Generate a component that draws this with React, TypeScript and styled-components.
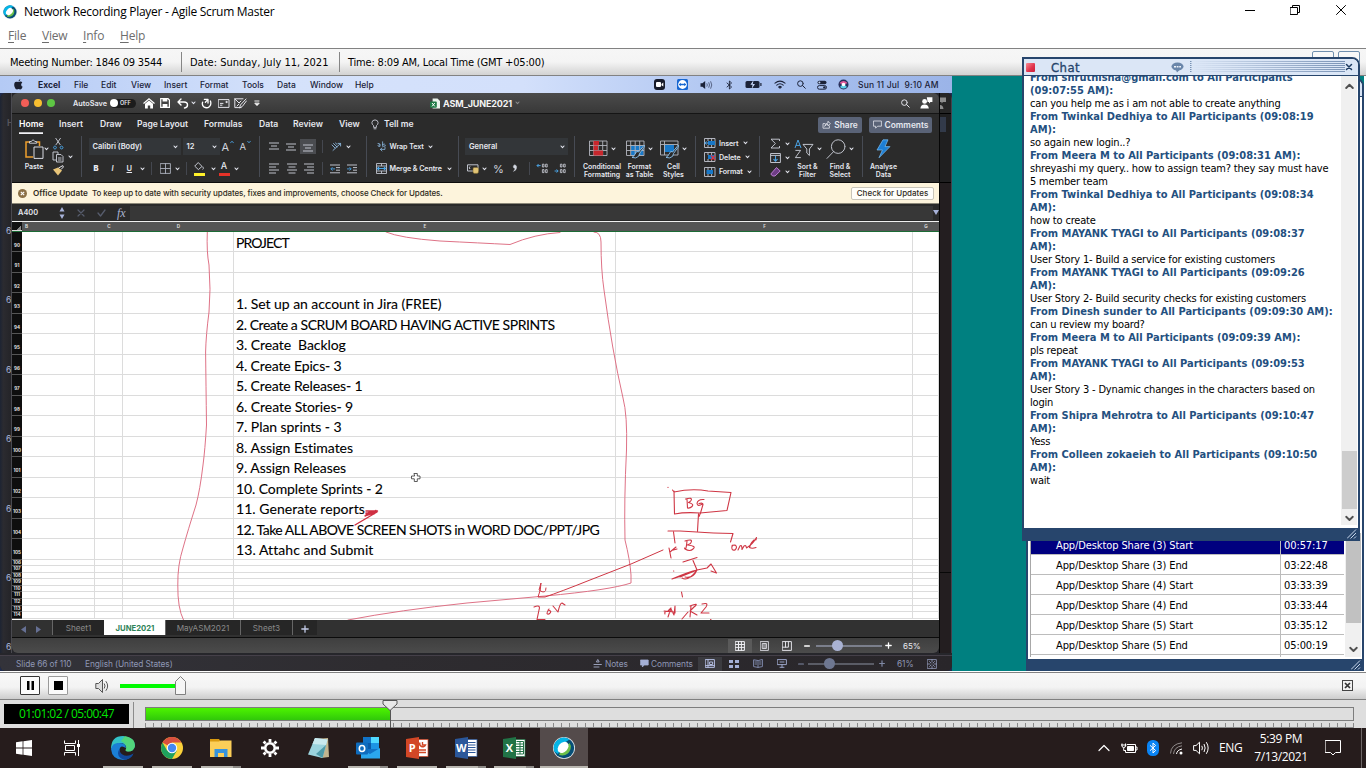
import React from "react";
import styled, { createGlobalStyle, css } from "styled-components";

const TAHOMA = `"DejaVu Sans Condensed", "DejaVu Sans", "Liberation Sans", sans-serif`;
const SEGOE = `"Open Sans", "Noto Sans", sans-serif`;
const MAC = `Inter, Roboto, "Liberation Sans", sans-serif`;
const NAVY = "#27456c";

const GlobalStyle = createGlobalStyle`
  * { box-sizing: border-box; }
  body { margin: 0; width: 1366px; height: 768px; overflow: hidden; background: #fff; }
  svg { display: block; flex: none; }
`;

/* ---------- application frame ---------- */

const Page = styled.div`
  width: 1366px;
  height: 768px;
  display: flex;
  flex-direction: column;
  overflow: hidden;
  background: #fff;
  white-space: pre;
  > * { flex: none; }
`;

const TitleBar = styled.header`
  height: 24px;
  display: flex;
  align-items: center;
  padding-left: 3px;
  font: 12px/16px ${SEGOE};
  letter-spacing: -0.28px;
  color: #000;
`;
const TitleText = styled.span`
  padding-left: 7px;
  flex: 1;
`;
const WindowButtons = styled.div`
  display: grid;
  grid-template-columns: repeat(3, 45.5px);
  justify-items: center;
  align-items: center;
  align-self: flex-start;
  height: 20px;
  width: 139px;
`;

const MenuBar = styled.nav`
  height: 24px;
  display: grid;
  grid-template-columns: 34px 41px 37px 40px;
  align-items: center;
  padding-left: 8px;
  font: 12px/16px ${SEGOE};
  letter-spacing: -0.2px;
  color: #6d6d6d;
  u { text-underline-offset: 2px; }
`;

const InfoBar = styled.div`
  height: 28px;
  border-top: 1px solid #828282;
  border-bottom: 1px solid #828282;
  background: linear-gradient(#f6f6f6 0, #f4f4f4 50%, #d2d2d2 100%);
  display: flex;
  align-items: center;
  font: 11px/14px ${TAHOMA};
  color: #000;
`;
const InfoCell = styled.div<{ $w: number; $pad: number; $ls?: number; $last?: boolean }>`
  width: ${(p) => p.$w}px;
  height: 20px;
  padding: 4px 0 0 ${(p) => p.$pad}px;
  border-right: 1px solid ${(p) => (p.$last ? "transparent" : "#858585")};
  letter-spacing: ${(p) => p.$ls ?? 0}px;
`;

const Stage = styled.main`
  height: 595px;
  width: 1364px;
  display: flex;
  position: relative;
  background: #008080;
`;

/* ---------- shared Mac desktop ---------- */

const MacDesktop = styled.section`
  width: 952px;
  height: 595px;
  display: flex;
  flex-direction: column;
  background: #1f2b4d;
  overflow: hidden;
  font-family: ${MAC};
`;

const MacMenu = styled.div`
  height: 17px;
  flex: none;
  display: grid;
  grid-template-columns: 24px 36px 27px 30px 33px 36px 42px 35px 33px 45px 1fr 23px 23px 26px 19px 29px 23px 20px 21px 20px 94px;
  align-items: center;
  padding-left: 14px;
  background: linear-gradient(90deg, #b4caf5, #d5e2fb 30%, #d3e0fb 55%, #a9c1ef 80%, #9bb4e8);
  color: #1b2238;
  font-size: 8.5px;
  font-weight: 500;
  b { font-weight: 700; }
`;
const MacClock = styled.span`
  letter-spacing: 0.2px;
`;

const MacBody = styled.div`
  flex: 1;
  min-height: 0;
  display: grid;
  grid-template-columns: 12px 927px 13px;
  grid-template-rows: 560px 1fr;
  background: #26262b;
  border-radius: 6px;
  overflow: hidden;
`;

const SlideStrip = styled.div`
  background: linear-gradient(90deg, #1d2433, #2b2b30 30%, #242428);
  border-right: 1px solid #4a4a50;
  display: flex;
  flex-direction: column;
  overflow: hidden;
  font-size: 8.5px;
  line-height: 10px;
  color: #aab6da;
  padding: 24px 0 0 6px;
`;
const StripTab = styled.div`
  height: 109px;
  flex: none;
  font-weight: 700;
  line-height: 12px;
  color: #55555c;
  padding-left: 1px;
`;
const StripNumber = styled.div`
  height: 69.4px;
  flex: none;
`;

const BackEdge = styled.div`
  background: #231e20;
  border-left: 1px solid #060606;
  border-right: 1px solid #45424d;
  display: flex;
  flex-direction: column;
`;
const BackEdgeTop = styled.div`
  height: 21px;
  border-bottom: 1px solid #000;
  background: #262626;
  padding-top: 4px;
`;
const BackEdgeRibbon = styled.div`
  height: 69px;
  border-bottom: 1px solid #000;
  background: #1f1f20;
  padding-top: 3px;
`;
const BackEdgeButton = styled.div`
  width: 6px;
  height: 15px;
  background: #323a4a;
`;
const BackEdgeLine = styled.div`
  margin-top: 389px;
  height: 1px;
  background: #080808;
`;

const BackStatus = styled.div`
  grid-column: 1 / 4;
  display: grid;
  grid-template-columns: 69px 508px 12px 35px 11px 47px 24px 24px 24px 24px 14px 71px 18px 30px 1fr;
  align-items: center;
  padding: 0 0 0 16px;
  margin-top: 2px;
  border-top: 1px solid #454049;
  background: linear-gradient(90deg, #33333a, #2e2c30 40%, #29262a);
  color: #8f97b4;
  font-size: 8.3px;
  letter-spacing: -0.07px;
`;

/* ---------- spreadsheet window ---------- */

const ExcelWindow = styled.div`
  height: 560px;
  border-radius: 6px;
  overflow: hidden;
  display: flex;
  flex-direction: column;
  background: #2b2b2b;
  color: #e6e8ef;
  > * { flex: none; }
`;

const ExcelTitle = styled.div`
  height: 21px;
  display: grid;
  grid-template-columns: 13px 13px 26px 37px 33px 17px 17px 14px 10px 17px 16px 20px 176px 13px 72px 386px 19px 1fr;
  align-items: center;
  padding-left: 9px;
  background: linear-gradient(#4b4b4b, #383838);
  border-bottom: 1px solid #151515;
  font-size: 7.3px;
  font-weight: 600;
`;
const Light = styled.i<{ $c: string }>`
  width: 8px;
  height: 8px;
  border-radius: 50%;
  background: ${(p) => p.$c};
`;
const Toggle = styled.div`
  width: 26px;
  height: 9px;
  border-radius: 5px;
  background: #1c1c1c;
  display: flex;
  align-items: center;
  gap: 2px;
  font-size: 5.5px;
  line-height: 9px;
  &::before {
    content: "";
    width: 8px;
    height: 8px;
    border-radius: 50%;
    background: #fff;
  }
`;
const FileName = styled.span`
  font-size: 9px;
  font-weight: 700;
  color: #f4f4f4;
  letter-spacing: -0.15px;
`;

const RibbonTabs = styled.div`
  height: 21px;
  display: grid;
  grid-template-columns: 40px 41px 37px 67px 55px 34px 46px 32px 13px 434px 51px 63px;
  align-items: center;
  padding-left: 7px;
  font-size: 8.6px;
  font-weight: 600;
`;
const RibbonTab = styled.span<{ $active?: boolean }>`
  justify-self: start;
  line-height: 15px;
  height: 17px;
  margin-top: 1px;
  ${(p) => p.$active && css`box-shadow: inset 0 -2px 0 -0.3px #f2f2f6; color: #fff;`}
`;
const RibbonButton = styled.div<{ $w: number }>`
  width: ${(p) => p.$w}px;
  height: 16px;
  border-radius: 2px;
  background: #5a6377;
  display: flex;
  align-items: center;
  justify-content: center;
  gap: 3px;
  font-size: 8.4px;
`;

const Ribbon = styled.div`
  height: 48px;
  display: flex;
  padding-top: 1px;
  border-bottom: 1px solid #0c0c0c;
  font-size: 7.5px;
  font-weight: 600;
`;
const RibbonGroup = styled.div<{ $w: number; $last?: boolean }>`
  width: ${(p) => p.$w}px;
  height: 43px;
  flex: none;
  ${(p) => !p.$last && css`background: linear-gradient(#474b54, #474b54) 100% 0 / 1px 41px no-repeat;`}
  display: flex;
  flex-direction: column;
  justify-content: space-between;
`;
const Tools = styled.div<{ $cols: string; $h?: number }>`
  height: ${(p) => p.$h ?? 21}px;
  display: grid;
  grid-template-columns: ${(p) => p.$cols};
  align-items: center;
`;
const ToolLabel = styled.span`
  font-size: 7.1px;
  letter-spacing: -0.08px;
`;
const Combo = styled.div<{ $w: number }>`
  width: ${(p) => p.$w}px;
  height: 17px;
  padding: 0 3px 0 4px;
  background: #333639;
  display: flex;
  align-items: center;
  justify-content: space-between;
`;
const Divider = styled.i`
  width: 1px;
  height: 13px;
  background: #44474f;
`;
const BigTools = styled.div<{ $cols: string }>`
  height: 43px;
  display: grid;
  grid-template-columns: ${(p) => p.$cols};
`;
const BigTool = styled.div`
  display: flex;
  flex-direction: column;
  align-items: center;
  line-height: 8px;
  font-size: 6.9px;
  text-align: center;
`;
const BigIcon = styled.div`
  height: 26.5px;
  display: flex;
  align-items: center;
  gap: 3px;
`;
const Glyph = styled.span<{ $size: number }>`
  font-size: ${(p) => p.$size}px;
  line-height: 14px;
  font-weight: 400;
  color: #d0d4de;
`;
const FontSizeIcon = styled.span`
  display: flex;
  align-items: flex-start;
  gap: 0.5px;
`;
const SwatchedIcon = styled.span<{ $c: string }>`
  width: 11px;
  height: 14px;
  display: flex;
  align-items: center;
  justify-content: center;
  font-size: 9px;
  font-weight: 500;
  line-height: 10px;
  padding-bottom: 2px;
  border-bottom: 3px solid ${(p) => p.$c};
`;
const ActiveLines = styled.div`
  width: 16px;
  height: 15px;
  display: flex;
  align-items: center;
  justify-content: center;
  background: #4a4c50;
  margin-left: -1px;
`;
const CaretColumn = styled.div`
  display: flex;
  flex-direction: column;
  justify-content: space-between;
  align-items: center;
  padding: 6px 0 5px;
`;

const UpdateBar = styled.div`
  height: 21px;
  display: grid;
  grid-template-columns: 15px 59px 759px 1fr;
  align-items: center;
  padding-left: 6px;
  background: #fdf4dc;
  border-bottom: 1px solid #8b8778;
  color: #2f2b22;
  font-size: 8px;
  font-weight: 500;
  b { font-weight: 600; font-size: 8.2px; }
`;
const UpdateText = styled.span`
  letter-spacing: -0.1px;
`;
const UpdateButton = styled.div`
  width: 83px;
  height: 13px;
  border: 1px solid #c9c5b9;
  border-radius: 2px;
  background: #fffefa;
  text-align: center;
  line-height: 11px;
`;

const FormulaBar = styled.div`
  height: 18px;
  display: grid;
  grid-template-columns: 41px 18px 20px 20px 13px 803px 1fr;
  align-items: center;
  padding-left: 6px;
  background: #2a2a2a;
  border-bottom: 1px solid #f0f0f0;
  font-size: 7.4px;
  font-weight: 600;
`;
const FormulaField = styled.div`
  height: 14px;
  background: #373737;
`;
const Fx = styled.span`
  font: italic 12px/12px "Liberation Serif", serif;
  color: #aab4d2;
`;

const sheetColumns = "10px 73px 28px 111px 382px 297px 1fr";

const ColumnHeads = styled.div`
  height: 10px;
  display: grid;
  grid-template-columns: ${sheetColumns};
  background: #555;
  border-bottom: 1px solid #1c6b35;
  color: #d8d8d8;
  font-size: 4.6px;
  font-weight: 700;
  line-height: 9px;
  text-align: center;
`;
const ClippedHead = styled.span`
  text-align: left;
  padding-left: 3px;
`;
const Corner = styled.i`
  background: #111;
  border-bottom: 1px solid #ddd;
  &::after {
    content: "";
    display: block;
    margin: 3px 1px 0 4px;
    height: 5px;
    background: linear-gradient(135deg, transparent 50%, #8a8a8a 50%);
  }
`;

const Sheet = styled.div`
  position: relative;
  height: 388px;
  background: #fff;
  overflow: hidden;
`;
const SheetRow = styled.div<{ $small?: boolean }>`
  height: ${(p) => (p.$small ? 6.6 : 20.47)}px;
  display: grid;
  grid-template-columns: ${sheetColumns};
  grid-template-rows: 100%;
`;
const RowHead = styled.div<{ $small?: boolean }>`
  background: #0e0e0e;
  color: #e4e4e4;
  font: 700 4.5px/6px ${MAC};
  text-align: center;
  border-bottom: 0.5px solid #555;
  padding-top: ${(p) => (p.$small ? 0 : 11)}px;
`;
const Cell = styled.div<{ $ls?: number }>`
  border-right: 1px solid #dcdcdc;
  border-bottom: 1px solid #dcdcdc;
  color: #000;
  font: 14px/22px Lato, "Open Sans", sans-serif;
  -webkit-text-stroke: 0.1px #000;
  letter-spacing: ${(p) => p.$ls ?? 0}px;
  padding-left: 2px;
`;
const Ink = styled.svg`
  position: absolute;
  left: 0;
  top: 0;
`;

const SheetTabs = styled.div`
  height: 18px;
  display: grid;
  grid-template-columns: 40px 52px 61px 75px 52px 25px 1fr;
  background: #313131;
  border-bottom: 1px solid #0b0b0b;
  font-size: 8.2px;
  color: #8a8a8a;
`;
const SheetTab = styled.div<{ $active?: boolean }>`
  height: 15px;
  line-height: 17px;
  text-align: center;
  border-left: 1px solid #666;
  background: #262626;
  ${(p) => p.$active && css`background: #fff; color: #2e8358; font-weight: 700; font-size: 7.7px; border-color: #fff;`}
`;
const TabArrows = styled.div`
  display: flex;
  gap: 10px;
  padding: 6px 0 0 9px;
`;
const PlusSpace = styled.span`
  padding-top: 5px;
`;

const ExcelStatus = styled.div`
  height: 15px;
  display: grid;
  grid-template-columns: 716px 24px 24px 22px 18px 69px 18px 1fr;
  align-items: center;
  background: linear-gradient(#3f3f3f, #4b4b4b);
  font-size: 8px;
  color: #e8e8ee;
`;
const ActiveView = styled.div<{ $dim?: boolean }>`
  width: 24px;
  height: 14px;
  display: flex;
  align-items: center;
  justify-content: center;
  background: ${(p) => (p.$dim ? "#3b3b40" : "#5a5a5a")};
`;
const ZoomTrack = styled.div<{ $dim?: boolean }>`
  width: 66px;
  height: 2px;
  background: ${(p) => (p.$dim ? "#5a5c66" : "#7b7f8c")};
  display: flex;
  align-items: center;
  padding-left: 16px;
  &::before {
    content: "";
    width: 11px;
    height: 11px;
    border-radius: 50%;
    background: ${(p) => (p.$dim ? "#6e7791" : "#a9b2d3")};
  }
`;
const Center = styled.div`
  display: flex;
  justify-content: center;
`;

/* ---------- floating panels ---------- */

const EventPanel = styled.section`
  position: absolute;
  left: 1026px;
  top: 2px;
  width: 338px;
  height: 593px;
  border: solid ${NAVY};
  border-width: 2px 2px 12px 2px;
  border-radius: 0 8px 0 0;
  background: #fff;
  overflow: hidden;
  display: flex;
  align-items: flex-end;
  padding: 0 1px 2px 2px;
  font: 11px/14px ${TAHOMA};
  letter-spacing: -0.1px;
`;
const PanelCap = styled.div`
  position: absolute;
  right: 0;
  top: 0;
  width: 40px;
  height: 17px;
  background: #d7e3f4;
  border-bottom: 1px solid ${NAVY};
`;
const EventTable = styled.div`
  width: 315px;
  border-left: 1px solid #a8a8a8;
  display: grid;
  grid-auto-rows: 20px;
  height: 122px;
  overflow: hidden;
`;
const EventRow = styled.div<{ $selected?: boolean }>`
  display: grid;
  grid-template-columns: 249px 1fr;
  grid-template-rows: 20px;
  line-height: 22px;
  color: #000;
  ${(p) => p.$selected && css`background: #00007f; color: #fff;`}
  span {
    border-bottom: 1px solid #bcbcbc;
    padding-left: 25px;
  }
  span + span {
    border-left: 1px solid #bcbcbc;
    padding-left: 3px;
  }
`;
const EventScroll = styled.div`
  width: 16px;
  height: 124px;
  margin-left: 1px;
  background: #f0f0f0;
  display: flex;
  flex-direction: column;
  justify-content: space-between;
  align-items: center;
  padding-bottom: 4px;
  &::before {
    content: "";
    width: 15px;
    height: 90px;
    background: #c1c1c1;
  }
`;
const Grip = styled.svg`
  position: absolute;
  right: 1px;
  bottom: -11px;
`;
const PanelGrip = styled.div`
  position: absolute;
  left: 1348px;
  bottom: 12px;
  width: 14px;
`;

const ChatPanel = styled.section`
  position: absolute;
  left: 1022px;
  top: -19px;
  width: 338px;
  height: 484px;
  border: 2px solid ${NAVY};
  border-bottom-width: 13px;
  border-radius: 0 8px 0 0;
  background: #fff;
  display: flex;
  flex-direction: column;
`;
const ChatHeader = styled.div`
  height: 17px;
  flex: none;
  border-bottom: 1px solid ${NAVY};
  background: #dbe6f6;
  border-radius: 0 6px 0 0;
  display: grid;
  grid-template-columns: 25px 120px 17px 157px 1fr;
  align-items: center;
  padding-left: 2px;
  font: 13px/15px "DejaVu Sans Condensed", sans-serif;
  letter-spacing: 0.4px;
  color: #24436a;
`;
const ChatTitle = styled.span`
  -webkit-text-stroke: 0.3px #24436a;
`;
const RecordDot = styled.i`
  width: 9px;
  height: 9px;
  border-radius: 1px;
  background: linear-gradient(135deg, #f88a94, #e0314b 60%, #c9203b);
`;
const HeaderStripes = styled.div`
  height: 12px;
  margin-left: 2px;
  background: repeating-linear-gradient(rgba(80, 112, 155, 0.7) 0 1px, transparent 1px 2px);
  mask-image: linear-gradient(90deg, #000 1px, transparent 2px, #000 100%);
`;
const ChatBody = styled.div`
  flex: 1;
  min-height: 0;
  display: flex;
  justify-content: space-between;
  padding-right: 1px;
`;
const Messages = styled.div`
  overflow: hidden;
  padding-left: 6px;
  font: 11px/13px ${TAHOMA};
  color: #000;
  flex: 1;
  display: flex;
  flex-direction: column;
`;
const Message = styled.div`
  &:first-child { margin-top: -5px; }
  letter-spacing: -0.18px;
`;
const Sender = styled.div`
  font-weight: 700;
  color: #24507f;
  letter-spacing: 0.01px;
`;
const ChatScroll = styled.div`
  width: 16px;
  height: 449px;
  background: #f0f0f0;
  display: flex;
  flex-direction: column;
  align-items: center;
  padding-top: 7px;
`;
const ChatThumb = styled.div`
  width: 15px;
  height: 58px;
  margin: 361px 0 6px;
  background: #cdcdcd;
`;
const HiddenButtons = styled.div`
  position: absolute;
  left: 1312px;
  top: -25px;
  display: flex;
  gap: 4px;
  i {
    width: 22px;
    height: 12px;
    border: 1px solid #6f8fae;
    border-radius: 2px;
    background: #f8f8f8;
  }
`;

/* ---------- player ---------- */

const Controls = styled.div`
  height: 27px;
  margin-top: 1px;
  border-top: 1px solid #828282;
  background: linear-gradient(#f8f8f8 0, #f3f3f3 55%, #cdcdcd 100%);
  display: grid;
  grid-template-columns: 28px 47px 25px 1222px 1fr;
  align-items: center;
  padding: 0 0 1px 20px;
`;
const PlayerButton = styled.div<{ $soft?: boolean }>`
  width: 20px;
  height: 19px;
  border: 1px solid ${(p) => (p.$soft ? "#9a9a9a" : "#333")};
  border-radius: 1px;
  background: #fbfbfb;
  display: flex;
  align-items: center;
  justify-content: center;
`;
const VolumeTrack = styled.div`
  height: 19px;
  display: flex;
  align-items: center;
  &::before {
    content: "";
    width: 56px;
    height: 4px;
    background: #00fa00;
  }
  svg { margin-left: -1px; }
`;

const Timeline = styled.div`
  height: 29px;
  border-top: 1px solid #808080;
  background: #dedede;
  display: flex;
`;
const Clock = styled.div`
  width: 125px;
  height: 20px;
  margin: 4px 4px 0 4px;
  background: #000;
  color: #00e800;
  text-align: center;
  font: 12px/19px "Open Sans", sans-serif;
  letter-spacing: -0.55px;
`;
const TrackArea = styled.div`
  width: 1221px;
  height: 26px;
  margin-top: 2px;
  padding: 5px 0 0 11px;
  border-left: 1px solid #8c8c8c;
  position: relative;
`;
const Track = styled.div`
  height: 14px;
  border: 1px solid #7d7d7d;
  &::before {
    content: "";
    display: block;
    width: 244px;
    height: 12px;
    background: linear-gradient(#4df400, #30c80a);
  }
`;
const Ticks = styled.div`
  margin-top: 2px;
  height: 5px;
  border-bottom: 1px solid #8a8a8a;
  background: repeating-linear-gradient(90deg, #8a8a8a 0 1px, transparent 1px 8px);
`;
const PlayHead = styled.svg`
  position: absolute;
  left: 248px;
  top: -2px;
`;

/* ---------- Windows taskbar ---------- */

const Taskbar = styled.footer`
  height: 40px;
  background: #261c1c;
  display: flex;
  color: #fff;
`;
const TaskItem = styled.div<{ $w: number; $run?: boolean; $active?: boolean; $stack?: boolean }>`
  width: ${(p) => p.$w}px;
  height: 40px;
  display: flex;
  align-items: center;
  justify-content: center;
  ${(p) => p.$run && css`
    background: ${p.$active ? "linear-gradient(#b9b6b0,#b9b6b0) 0 100% / 100% 2px no-repeat, #544b4b" : `linear-gradient(90deg, #b9b6b0 0 ${p.$stack ? 32 : 40}px, #8c8986 0) 50% 100% / 40px 2px no-repeat`};
  `}
`;
const Tray = styled.div`
  margin-left: auto;
  display: grid;
  grid-template-columns: 23px 26px 23px 23px 26px 34px 54px 18px 21px 1fr;
  align-items: center;
  width: 268px;
  font: 12px/18px ${SEGOE};
  letter-spacing: -0.35px;
`;
const TrayClock = styled.div`
  text-align: center;
  width: 58px;
  margin-left: -1px;
`;
const ShowDesktop = styled.i`
  justify-self: end;
  width: 5px;
  height: 40px;
  border-left: 1px solid #6d6666;
`;

/* ---------- icons ---------- */

type StrokeProps = { d: string; w?: number; h?: number; vb?: string; c?: string; sw?: number; fill?: string };
const Stroke = ({ d, w = 12, h = 12, vb, c = "#d5d8e2", sw = 1, fill = "none" }: StrokeProps) => (
  <svg width={w} height={h} viewBox={vb ?? `0 0 ${w} ${h}`} fill={fill} stroke={c} strokeWidth={sw} strokeLinecap="round" strokeLinejoin="round">
    <path d={d} />
  </svg>
);

const Caret = ({ c = "#e3e5ee" }: { c?: string }) => <Stroke w={5} h={4} d="M1 1L2.5 2.7L4 1" c={c} sw={1.1} />;
const SearchIcon = ({ c = "#1b2238", s = 9 }: { c?: string; s?: number }) => (
  <Stroke w={s} h={s} vb="0 0 9 9" d="M6.2 3.6A2.8 2.8 0 1 1 .6 3.6A2.8 2.8 0 1 1 6.2 3.6M5.6 5.6L8.3 8.3" c={c} />
);

const WebexLogo = ({ s }: { s: number }) => (
  <svg width={s} height={s} viewBox="0 0 22 22">
    <circle cx="11" cy="11" r="11" fill="#dfe6ea" />
    <circle cx="11" cy="11" r="10.2" fill="#064f77" />
    <path d="M1.4 14.5A10.2 10.2 0 0 1 16.5 2.4L11 6L5 17Z" fill="#05b5e6" />
    <path d="M6 18Q15 20 17.6 12Q18.4 8 16.5 6L8 14Z" fill="#6cc04a" />
    <ellipse cx="10.1" cy="10.4" rx="4.6" ry="6.3" transform="rotate(42 10.1 10.4)" fill="#fff" />
  </svg>
);

const Lines = ({ rows }: { rows: [number, number, number][] }) => (
  <svg width="10" height="11" viewBox="0 0 10 11" stroke="#cfd2dc" strokeWidth="0.9">
    {rows.map(([x1, x2, y]) => <path key={y} d={`M${x1} ${y}H${x2}`} />)}
  </svg>
);

const Indent = ({ right }: { right?: boolean }) => (
  <svg width="11" height="10" viewBox="0 0 11 10" strokeWidth="0.9" fill="none">
    <path d="M0 1H10M6 3.6H10M6 6.2H10M0 8.8H10" stroke="#cfd2dc" />
    <path d={right ? "M0 4.9H4M2.5 3.2L4.2 4.9L2.5 6.6" : "M5 4.9H1M2.5 3.2L.8 4.9L2.5 6.6"} stroke="#4ba3e3" />
  </svg>
);

const GridIcon = ({ kind }: { kind: "cond" | "table" | "cell" }) => (
  <svg width="19" height="19" viewBox="0 0 19 19">
    {kind === "table" && <path d="M5 5.5H17.5V15.5H5Z" fill="#1878c8" />}
    {kind === "cell" && <path d="M4 5H14V12H4Z" fill="#1878c8" />}
    <path d={kind === "cell" ? "M.5 1H18V15H.5ZM.5 4.5H18M4.5 1V15" : "M.5 1H18V15.5H.5ZM.5 5.5H18M.5 10.5H18M4.7 1V15.5M9.2 1V15.5M13.7 1V15.5"} stroke="#b3b6be" strokeWidth="0.9" fill="none" />
    {kind === "cond" && <path d="M4.5 1H10V5.3H4.5ZM4.5 10.5H14V15.5H4.5ZM4.5 5.8H9V10H4.5Z" fill="#c8272d" />}
    {kind !== "cond" && <path d="M18.4 5L12.6 12L10.8 11.4L9 14.2Q8 16.4 6 17.4Q10 19 12.6 16.3L13.6 13.4L19 6Z" fill="#2a2a2a" stroke="#8ec5f0" strokeWidth="0.9" />}
  </svg>
);

const SmallGrid = ({ kind }: { kind: "insert" | "delete" | "format" }) => (
  <svg width="12" height="10" viewBox="0 0 12 10" fill="none">
    <path d="M.5 .5H11M.5 9.5H11M.5 .5V9.5M4 .5V3M7.6 .5V3M11 .5V9.5M4 7V9.5M7.6 7V9.5" stroke="#bfc3cd" strokeWidth="0.9" />
    <rect x={kind === "format" ? 2.5 : 4} y="3" width={kind === "format" ? 6.5 : 7} height="4" fill="#1878c8" />
    {kind === "insert" && <path d="M4.5 5H.8M2.4 3.4L.8 5L2.4 6.6" stroke="#58aef0" />}
    {kind === "delete" && <path d="M7 3.5L11 8M11 3.5L7 8" stroke="#e4343c" strokeWidth="1.2" />}
  </svg>
);

const DecimalIcon = ({ right }: { right?: boolean }) => (
  <svg width="12" height="11" viewBox="0 0 12 11" fill="none">
    <path d="M6.4 1.2H8V4H6.4ZM9.6 1.2H11.2V4H9.6ZM9.6 6.6H11.2V9.6H9.6ZM6.4 6.6H8V9.6H6.4Z" stroke="#cfd2dc" strokeWidth="0.8" />
    <path d={right ? "M.6 8H4M2.6 6.4L4.2 8L2.6 9.6" : "M4.6 2.6H1M2.6 1L1 2.6L2.6 4.2"} stroke="#4ba3e3" />
  </svg>
);

const OfficeIcon = ({ letter, color, children }: { letter: string; color: string; children: React.ReactNode }) => (
  <svg width="24" height="24" viewBox="0 0 24 24">
    <rect x="11" y="3.5" width="12" height="17" fill="#fff" stroke={color} strokeWidth="0.7" />
    {children}
    <path d="M1 3L14 1V23L1 21Z" fill={color} />
    <text x="7.3" y="16" fontSize="11" fontWeight="700" fontFamily="Open Sans" fill="#fff" textAnchor="middle">{letter}</text>
  </svg>
);

const ScrollArrow = ({ up }: { up?: boolean }) => (
  <Stroke w={9} h={7} d={up ? "M1.2 5L4.5 1.8L7.8 5" : "M1.2 1.8L4.5 5L7.8 1.8"} c="#505050" sw={1.9} />
);

const GripLines = () => (
  <Grip width="10" height="10" viewBox="0 0 10 10" stroke="#c8d6ea" strokeWidth="1">
    <path d="M0 9.5L9 .5M3.5 9.5L9 4M7 9.5L9 7.5" />
  </Grip>
);

/* ---------- content ---------- */

const rows: { n: number; text?: string; ls?: number }[] = [
  { n: 90, text: "PROJECT", ls: -0.9 },
  { n: 91 },
  { n: 92 },
  { n: 93, text: "1. Set up an account in Jira (FREE)", ls: -0.06 },
  { n: 94, text: "2. Create a SCRUM BOARD HAVING ACTIVE SPRINTS", ls: -0.45 },
  { n: 95, text: "3. Create  Backlog", ls: -0.08 },
  { n: 96, text: "4. Create Epics- 3", ls: -0.14 },
  { n: 97, text: "5. Create Releases- 1", ls: -0.13 },
  { n: 98, text: "6. Create Stories- 9", ls: -0.06 },
  { n: 99, text: "7. Plan sprints - 3", ls: -0.06 },
  { n: 100, text: "8. Assign Estimates", ls: -0.02 },
  { n: 101, text: "9. Assign Releases", ls: -0.06 },
  { n: 102, text: "10. Complete Sprints - 2", ls: -0.1 },
  { n: 103, text: "11. Generate reports", ls: 0.05 },
  { n: 104, text: "12. Take ALL ABOVE SCREEN SHOTS in WORD DOC/PPT/JPG", ls: -0.53 },
  { n: 105, text: "13. Attahc and Submit", ls: 0.07 },
  ...[106, 107, 108, 109, 110, 111, 112, 113, 114].map((n) => ({ n })),
];

const messages: { from: string; text: string }[] = [
  { from: "From shruthisha@gmail.com to All Participants\n(09:07:55 AM):", text: "can you help me as i am not able to create anything" },
  { from: "From Twinkal Dedhiya to All Participants (09:08:19\nAM):", text: "so again new login..?" },
  { from: "From Meera M to All Participants (09:08:31 AM):", text: "shreyashi my query.. how to assign team? they say must have\n5 member team" },
  { from: "From Twinkal Dedhiya to All Participants (09:08:34\nAM):", text: "how to create" },
  { from: "From MAYANK TYAGI to All Participants (09:08:37\nAM):", text: "User Story 1- Build a service for existing customers" },
  { from: "From MAYANK TYAGI to All Participants (09:09:26\nAM):", text: "User Story 2- Build security checks for existing customers" },
  { from: "From Dinesh sunder to All Participants (09:09:30 AM):", text: "can u review my board?" },
  { from: "From Meera M to All Participants (09:09:39 AM):", text: "pls repeat" },
  { from: "From MAYANK TYAGI to All Participants (09:09:53\nAM):", text: "User Story 3 - Dynamic changes in the characters based on\nlogin" },
  { from: "From Shipra Mehrotra to All Participants (09:10:47\nAM):", text: "Yess" },
  { from: "From Colleen zokaeieh to All Participants (09:10:50\nAM):", text: "wait" },
];

const events: [string, string][] = [
  ["App/Desktop Share (3) Start", "00:57:17"],
  ["App/Desktop Share (3) End", "03:22:48"],
  ["App/Desktop Share (4) Start", "03:33:39"],
  ["App/Desktop Share (4) End", "03:33:44"],
  ["App/Desktop Share (5) Start", "03:35:12"],
  ["App/Desktop Share (5) End", "05:00:19"],
];

const MacMenuBar = () => (
  <MacMenu>
    <svg width="9" height="11" viewBox="0 0 9 11" fill="#1b2030">
      <path d="M6.4 0Q6.4 1.7 4.5 2.4Q4.4 .8 6.4 0ZM4.5 3.1Q5.6 2.5 6.6 2.6Q7.7 2.7 8.3 3.5Q7 4.4 7.2 5.9Q7.4 7.3 8.7 7.8Q7.6 10.6 6.2 10.5L4.6 10.1L3 10.5Q1.6 10.6 .6 7.9Q-.5 4.6 1.3 3.1Q2.6 2.2 4.5 3.1Z" />
    </svg>
    <b>Excel</b><span>File</span><span>Edit</span><span>View</span><span>Insert</span><span>Format</span><span>Tools</span><span>Data</span><span>Window</span><span>Help</span>
    <svg width="11" height="11"><rect width="11" height="11" rx="3" fill="#171b2a" /><rect x="2" y="3" width="5" height="5" rx="1" fill="#fff" /><path d="M7.5 5L9.3 3.5V7.6L7.5 6.2Z" fill="#fff" /></svg>
    <svg width="11" height="11"><rect width="11" height="11" rx="1.5" fill="#1767d2" /><circle cx="5.5" cy="5.5" r="4.4" fill="#fff" /><path d="M1.6 5.5L3.8 3.8V4.8H7.2V3.8L9.4 5.5L7.2 7.2V6.2H3.8V7.2Z" fill="#1767d2" /></svg>
    <svg width="14" height="10" viewBox="0 0 14 10"><path d="M.5 3.3H2.4L5.2 1V9L2.4 6.7H.5Z" fill="#1b2238" /><path d="M6.8 3.4Q7.8 5 6.8 6.6M8.7 2.3Q10.3 5 8.7 7.7M10.6 1.3Q12.9 5 10.6 8.7" fill="none" stroke="#4c5878" strokeWidth="0.9" /></svg>
    <Stroke w={7} h={10} d="M1 3L5.6 7L3.4 9V1L5.6 3L1 7" c="#1b2238" sw={0.9} />
    <svg width="17" height="9" viewBox="0 0 17 9"><rect x=".5" y="1" width="14" height="7" rx="1.5" fill="#1b2238" /><rect x="15.3" y="3" width="1.2" height="3" fill="#1b2238" /><path d="M8.6 0L5.4 4.8H7.6L6.6 9L10 4H7.8Z" fill="#c7d7f8" /></svg>
    <Stroke w={12} h={9} d="M1 3.2Q6 -1 11 3.2M2.8 5.2Q6 2.4 9.2 5.2M4.7 7Q6 5.8 7.3 7L6 8.2Z" c="#1b2238" sw={1.1} />
    <SearchIcon />
    <svg width="10" height="10" viewBox="0 0 10 10"><rect x=".5" y=".8" width="9" height="3.4" rx="1.7" fill="#1b2238" /><circle cx="2.4" cy="2.5" r="1" fill="#c7d7f8" /><rect x=".5" y="5.6" width="9" height="3.6" rx="1.8" fill="none" stroke="#1b2238" /><circle cx="7.4" cy="7.4" r="1.2" fill="#1b2238" /></svg>
    <svg width="11" height="11"><circle cx="5.5" cy="5.5" r="5" fill="#27305c" /><path d="M1.5 4Q5.5 0 9.5 4L5.5 6Z" fill="#e25a9a" /><path d="M2 8Q5.5 3 9 8Q5.5 11 2 8Z" fill="#5bd0e8" /><circle cx="5.5" cy="5.5" r="1.8" fill="#fff" /></svg>
    <MacClock>Sun 11 Jul  9:10 AM</MacClock>
  </MacMenu>
);

const ExcelChrome = () => (
  <>
    <ExcelTitle>
      <Light $c="#f25e57" /><Light $c="#f8be30" /><Light $c="#5ec644" />
      <span>AutoSave</span>
      <Toggle>OFF</Toggle>
      <svg width="12" height="11" viewBox="0 0 12 11"><path d="M.5 5.5L6 .8L11.5 5.5" stroke="#fff" strokeWidth="1.2" fill="none" /><path d="M2 5.8L6 2.4L10 5.8V10.5H7.2V7.5H4.8V10.5H2Z" fill="#fff" /></svg>
      <svg width="10" height="10" viewBox="0 0 10 10"><path d="M.7 .7H8L9.4 2V9.4H.7Z" fill="none" stroke="#fff" strokeWidth="1.2" /><path d="M2.6 .7H7.3V3.6H2.6ZM2.6 6H7.4V9.4H2.6Z" fill="#fff" /></svg>
      <Stroke w={12} h={11} d="M4 1L1 4L4 7M1 4H7Q10.5 4 10.5 7Q10.5 9.6 7.5 10" c="#fff" sw={1.4} />
      <Caret />
      <Stroke w={12} h={11} d="M9.4 3Q10.6 6 8.6 8.4Q6 10.6 3.2 9.2Q.6 7.4 1.6 4.2M3.4 1.4H7V5M7 1.4L4.4 4.2" c="#fff" sw={1.3} />
      <Stroke w={12} h={9} d="M.6 .6H11V8.4H.6ZM2.4 4.4H5M2.4 6.2H4M8.4 2.4H9.2V3.6H8.4Z" c="#e4e4ea" />
      <Stroke w={13} h={11} d="M9 .8H.8V9.6H7M.8 .8L5 5L7 3M12 1L6.4 7L5.6 10L8.4 8.4L12.4 3M3 8L5 6" c="#e4e4ea" />
      <Stroke w={6} h={7} d="M.8 1H5M1 3.4L3 5.6L5 3.4Z" c="#fff" fill="#fff" sw={0.9} />
      <svg width="11" height="11" viewBox="0 0 11 11"><path d="M2.6 .5H7.5L10 3V10.5H2.6Z" fill="#e9f3ec" /><rect x="0" y="3.4" width="6.8" height="6.4" rx="1" fill="#1d7a45" /><path d="M2 5L4.8 8.4M4.8 5L2 8.4" stroke="#fff" /></svg>
      <FileName>ASM_JUNE2021</FileName>
      <Caret c="#8c8c8c" />
      <SearchIcon c="#e4e4ea" />
      <svg width="13" height="12" viewBox="0 0 13 12" fill="#fff"><circle cx="4.6" cy="4.4" r="2.4" /><path d="M.4 11.6Q.6 7.4 4.6 7.4Q8.4 7.4 8.8 11.6Z" /><path d="M6.8 .3H12.4V5H10.4L9 6.6V5H7.6Z" /></svg>
    </ExcelTitle>
    <RibbonTabs>
      <RibbonTab $active>Home</RibbonTab>
      <RibbonTab>Insert</RibbonTab>
      <RibbonTab>Draw</RibbonTab>
      <RibbonTab>Page Layout</RibbonTab>
      <RibbonTab>Formulas</RibbonTab>
      <RibbonTab>Data</RibbonTab>
      <RibbonTab>Review</RibbonTab>
      <RibbonTab>View</RibbonTab>
      <Stroke w={8} h={11} d="M2.6 8V6.6Q.8 5.4 .9 3.6Q1.1 1 4 .9Q6.9 1 7.1 3.6Q7.2 5.4 5.4 6.6V8ZM3 9.8H5" c="#c9ccd6" sw={0.9} />
      <RibbonTab>Tell me</RibbonTab>
      <RibbonButton $w={44}>
        <Stroke w={9} h={9} d="M3 3.6H1V8.2H7.4V6M2.8 6Q3.4 3 6 3V1.2L8.4 3.8L6 6V4.4Q4 4.2 2.8 6Z" c="#e4e6ee" sw={0.8} />Share
      </RibbonButton>
      <RibbonButton $w={63}>
        <Stroke w={9} h={9} d="M.8 1H8.4V6.2H4.6L2.6 8.2V6.2H.8Z" c="#e4e6ee" sw={0.8} />Comments
      </RibbonButton>
    </RibbonTabs>
  </>
);

const ExcelRibbon = () => (
  <Ribbon>
    <RibbonGroup $w={69.5}>
      <BigTools $cols="12px 20px 8px 12px 1fr">
        <i />
        <BigTool>
          <BigIcon>
            <svg width="19" height="20" viewBox="0 0 19 20" fill="none">
              <path d="M5 3H1V18H8" stroke="#efa02e" strokeWidth="1.5" /><path d="M12 3H14.5V7" stroke="#efa02e" strokeWidth="1.5" />
              <path d="M4.5 4.2V2.5H6.4Q8 -.6 9.8 2.5H11.7V4.2Z" stroke="#d8dae2" strokeWidth="0.9" />
              <path d="M9 8H18V19.4H9Z" stroke="#d8dae2" strokeWidth="1" fill="#2b2b2b" />
            </svg>
          </BigIcon>
          Paste
        </BigTool>
        <BigIcon><Caret /></BigIcon>
        <Center>
          <svg width="12" height="41" viewBox="0 -1 12 41" fill="none">
            <path d="M3.6 1L8.4 8M8.6 1L3.8 8" stroke="#cfd2dc" strokeWidth="0.9" /><path d="M4 9.6A1.4 1.4 0 1 1 3.9 9.5M10.6 9.6A1.4 1.4 0 1 1 10.5 9.5" stroke="#4ba3e3" />
            <path d="M1 15H6V17M1 15V23H4M4.5 17.5H9L11 19.5V25H4.5ZM6 21H9.5M6 23H9.5" stroke="#cfd2dc" strokeWidth="0.9" />
            <path d="M1 32.5L6 30.5L10 33.5L6 38.5Z" fill="#e7c478" /><path d="M6.5 31L10.8 28.6L11.4 30L9 32.5" stroke="#e4e4ea" />
          </svg>
        </Center>
        <Tools $cols="12px" $h={41}><Center><Caret /></Center></Tools>
      </BigTools>
    </RibbonGroup>
    <RibbonGroup $w={178.5}>
      <Tools $cols="7px 94px 39px 18px 1fr">
        <i />
        <Combo $w={92}>Calibri (Body)<Caret /></Combo>
        <Combo $w={37}>12<Caret /></Combo>
        <FontSizeIcon><Glyph $size={11}>A</Glyph><Stroke w={4} h={4} d="M.6 2.8L2 1.2L3.4 2.8" c="#4ba3e3" sw={0.9} /></FontSizeIcon>
        <FontSizeIcon><Glyph $size={9.5}>A</Glyph><Stroke w={4} h={4} d="M.6 1.2L2 2.8L3.4 1.2" c="#4ba3e3" sw={0.9} /></FontSizeIcon>
      </Tools>
      <Tools $cols="12px 18px 15px 13px 11px 9px 15px 11px 8px 15px 10px 15px 1fr">
        <i />
        <b>B</b><i>I</i><u>U</u><Caret /><Divider />
        <Stroke w={11} h={11} d="M.6 .6H10.4V10.4H.6ZM5.5 .6V10.4M.6 5.5H10.4" c="#aeb2be" sw={0.9} />
        <Caret />
        <Divider />
        <SwatchedIcon $c="#fff02a"><Stroke w={10} h={9} d="M4.5 .8L8 4.4L4.4 7.6L1 4.4ZM9 5Q10 7 9 7.4" sw={0.9} /></SwatchedIcon>
        <Center><Caret /></Center>
        <SwatchedIcon $c="#e53228">A</SwatchedIcon>
        <Caret />
      </Tools>
    </RibbonGroup>
    <RibbonGroup $w={106.5}>
      <Tools $cols="9px 17px 15px 21px 9px 15px 1fr">
        <i />
        <Lines rows={[[0, 10, 2], [2, 8, 5], [0, 10, 8]]} />
        <Lines rows={[[0, 10, 3], [2, 8, 6], [0, 10, 9]]} />
        <ActiveLines><Lines rows={[[0, 10, 4], [2, 8, 7], [0, 10, 10]]} /></ActiveLines>
        <Divider />
        <Stroke w={11} h={10} d="M1 3L4 6M2.5 1.5L6 5M4.5 1L6 2.4M2 8.4L9.4 1.6M7 1.4H9.6V4" c="#8db9e0" sw={0.9} />
        <Caret />
      </Tools>
      <Tools $cols="9px 17.5px 17.5px 18px 8px 17px 1fr">
        <i />
        <Lines rows={[[0, 10, 1], [0, 7, 4], [0, 10, 7], [0, 7, 10]]} />
        <Lines rows={[[0, 10, 1], [1.5, 8.5, 4], [0, 10, 7], [1.5, 8.5, 10]]} />
        <Lines rows={[[0, 10, 1], [3, 10, 4], [0, 10, 7], [3, 10, 10]]} />
        <Divider />
        <Indent />
        <Indent right />
      </Tools>
    </RibbonGroup>
    <RibbonGroup $w={92.5}>
      <Tools $cols="10px 13px 38px 1fr">
        <i />
        <Stroke w={10} h={11} d="M1 2.4Q3 2 3 4V5.4Q1 5.8 1 4.6Q1 3.8 3 3.8M5.6 .8V5.4Q8.6 5.6 8.4 4Q8 2.4 5.6 3.4M8 6V8.4H3.4M5 7L3.4 8.4L5 10" c="#8db9e0" sw={0.8} />
        <ToolLabel>Wrap Text</ToolLabel><Caret />
      </Tools>
      <Tools $cols="9px 14px 57px 1fr">
        <i />
        <svg width="11" height="11" viewBox="0 0 11 11" fill="none"><path d="M.5 .5H10.5V10.5H.5ZM.5 3H10.5M.5 8H10.5M5.5 .5V3M5.5 8V10.5" stroke="#bfc3cd" strokeWidth="0.9" /><path d="M1.5 5.5H9.5M3 4L1.5 5.5L3 7M8 4L9.5 5.5L8 7" stroke="#4ba3e3" strokeWidth="1.2" /></svg>
        <ToolLabel>Merge & Centre</ToolLabel><Caret />
      </Tools>
    </RibbonGroup>
    <RibbonGroup $w={116}>
      <Tools $cols="6px 1fr">
        <i />
        <Combo $w={103}>General<Caret /></Combo>
      </Tools>
      <Tools $cols="8px 15px 11px 19px 17px 7px 18px 1fr">
        <i />
        <svg width="12" height="10" viewBox="0 0 12 10" fill="none"><path d="M.5 .8H11V7H.5Z" stroke="#cfd2dc" strokeWidth="0.9" /><path d="M3 2.5Q1.6 3.8 3 5" stroke="#cfd2dc" /><rect x="6" y="3.4" width="5.5" height="6" rx="1.4" fill="#e2c475" stroke="#6c5a24" strokeWidth="0.5" /></svg>
        <Caret />
        <Glyph $size={11}>%</Glyph>
        <Stroke w={6} h={9} d="M2.8 1A1.6 1.6 0 1 0 3 4.2Q3 6 1.4 7.4Q5 6.4 4.6 2.6Q4.4 1.2 2.8 1Z" fill="#d5d8e2" sw={0.4} />
        <Divider />
        <DecimalIcon />
        <DecimalIcon right />
      </Tools>
    </RibbonGroup>
    <RibbonGroup $w={121}>
      <BigTools $cols="7px 40px 35px 33px">
        <i />
        <BigTool><BigIcon><GridIcon kind="cond" /><Caret /></BigIcon>{"Conditional\nFormatting"}</BigTool>
        <BigTool><BigIcon><GridIcon kind="table" /><Caret /></BigIcon>{"Format\nas Table"}</BigTool>
        <BigTool><BigIcon><GridIcon kind="cell" /><Caret /></BigIcon>{"Cell\nStyles"}</BigTool>
      </BigTools>
    </RibbonGroup>
    <RibbonGroup $w={64}>
      <Tools $cols="8px 15px 24px 1fr" $h={14.3}><i /><SmallGrid kind="insert" /><ToolLabel>Insert</ToolLabel><Caret /></Tools>
      <Tools $cols="8px 15px 26px 1fr" $h={14.3}><i /><SmallGrid kind="delete" /><ToolLabel>Delete</ToolLabel><Caret /></Tools>
      <Tools $cols="8px 15px 28px 1fr" $h={14.3}><i /><SmallGrid kind="format" /><ToolLabel>Format</ToolLabel><Caret /></Tools>
    </RibbonGroup>
    <RibbonGroup $w={102.5}>
      <BigTools $cols="9px 13px 10px 31px 34px">
        <i />
        <Center>
          <svg width="11" height="41" viewBox="0 -2 11 41" fill="none">
            <path d="M9.5 3V1.2H1L5.4 5.5L1 10H9.5V8" stroke="#cfd2dc" strokeWidth="0.9" />
            <path d="M.6 15.5H10.4V24.5H.6ZM.6 17.4H10.4" stroke="#cfd2dc" strokeWidth="0.9" /><path d="M5.5 18V23M3.5 21.2L5.5 23.2L7.5 21.2" stroke="#4ba3e3" strokeWidth="1.1" />
            <path d="M6.5 29.5L10.2 33L5 38H2.6L.8 36Z" stroke="#c686dd" fill="#6e3d86" strokeWidth="0.9" />
          </svg>
        </Center>
        <CaretColumn><Caret /><Caret /><Caret /></CaretColumn>
        <BigTool>
          <BigIcon>
            <svg width="20" height="20" viewBox="0 0 20 20" fill="none"><path d="M1 9L4 1L7 9M2 6.4H6" stroke="#4ba3e3" /><path d="M1.4 11.4H6.6L1.4 18.6H6.8" stroke="#cfd2dc" strokeWidth="0.9" /><path d="M9 5.4H19L15.4 10V16.5L12.8 14V10Z" stroke="#cfd2dc" strokeWidth="0.9" /></svg>
            <Caret />
          </BigIcon>
          {"Sort &\nFilter"}
        </BigTool>
        <BigTool>
          <BigIcon><Stroke w={20} h={21} d="M19 7.6A6.8 6.8 0 1 1 5.4 7.6A6.8 6.8 0 1 1 19 7.6M7.6 12.6L1 19.4" c="#cfd2dc" sw={0.9} /><Caret /></BigIcon>
          {"Find &\nSelect"}
        </BigTool>
      </BigTools>
    </RibbonGroup>
    <RibbonGroup $w={76} $last>
      <BigTools $cols="6px 30px">
        <i />
        <BigTool>
          <BigIcon><svg width="15" height="20" viewBox="0 0 15 20"><path d="M7 .8H12L9 7.6H14L3 18.8L6.4 11H1Z" fill="#1d7fd6" stroke="#7cc0f4" strokeWidth="0.7" /></svg></BigIcon>
          {"Analyse\nData"}
        </BigTool>
      </BigTools>
    </RibbonGroup>
  </Ribbon>
);

const Annotations = () => (
  <Ink width="927" height="388" viewBox="12 232 927 388" fill="none" stroke="#cf3644" strokeWidth="1.1" strokeLinecap="round" strokeLinejoin="round">
    <g stroke="#dc6a80" strokeWidth="0.95">
      <path d="M207.3 232Q206.5 252 209 265Q211 290 209 312Q206 335 205.6 352Q206 385 206.5 425Q205 450 203 465Q200 490 196 505Q188 530 183 548Q177.5 565 177.8 585Q177.5 608 183.5 620" />
      <path d="M386 232Q400 238 440 241Q480 243 510 244.5Q535 234 560 232.5M594 232Q601 232 601 242Q601 270 604 290Q612 350 623 398Q627.5 415 626.5 450Q624 500 625 540Q630 560 631 575V583Q610 590 545 596L467 603Q400 610 348 620" />
    </g>
    <path d="M663 550L631 564L590 580Q560 592 545 597H538Q541 590 541 583L539 590Q546 595 546 588" strokeWidth="1" />
    <path d="M674 491L674.5 514Q685 512 700 513L727 510.5L731 492.5L708 491Q692 488 674 492L672.5 490M668 487.2V487.4M698.5 514L697.5 531M668 531H680L697 532Q712 533 733 533.5L730.5 542M673.5 532L675 543" />
    <path d="M687 499L687.5 508M685.5 499Q693 497 691 500.5Q690 502 688.5 502.5Q694.5 504 692 506.5Q690 508.5 687.5 508M704 499.5Q697.5 499 697 503.5Q697.5 507 702.5 504M699 503.5Q703 502.5 703 504.5L700.5 513L699 516.5" />
    <path d="M669 548L671 558M676 547L670 552M671.5 550.5L677 549M687 541Q686 552 684.5 548M685 541Q694 538 690.5 543.5L687.5 545Q697 546 693 549Q690 552 685 549" />
    <path d="M732.5 546Q731 545 735 545Q738 547 735 550Q731 551 732 546M738 550L740 546Q742 544 742 549.5L744 546Q746 544.5 746.5 548Q753 544 756.5 537.5L756 540M754 540Q750 544 749.5 547.5Q752 549 756 547.5" />
    <path d="M683 562L697 557.5M693 560.5L697 570Q688 572 672 579Q680 577 687 573L697 570Q688 582 682 578M685 577Q693 579 697 570L707 568L711 564L716.5 573L711 571M697 570L680 577M673.5 571H673.8" />
    <path d="M681.5 592L682.5 597M665 614Q664 611 668 611L671 608L668 617M671 609L674 615L675 606V613M664 611L674 612M688 612L682 619M691 606L690 617M690 606Q700 602 694 607L690 611L697 615M702 604Q709 602 706 607L701 613H709M710.5 619.5H711" />
    <path d="M534 607Q541 604 539 610L537 619.5H545M549 609Q545 615 549 614Q553 611 548 610M553 606L558 612Q560 603 562 603L565 605" />
    <path d="M366 511H377.5L366 515.5L377 512L355 525M365 516L376 510.5M366 513L374 514M372 511L366 514" stroke="#cf2f42" strokeWidth="1.4" />
    <path d="M414.3 473.5H417.3V476H420V478.8H417.3V481.5H414.3V478.8H411.5V476H414.3Z" stroke="#333" strokeWidth="0.8" fill="#fff" />
  </Ink>
);

const ExcelSheet = () => (
  <>
    <ColumnHeads>
      <Corner /><ClippedHead>B</ClippedHead><span>C</span><span>D</span><span>E</span><span>F</span><span>G</span>
    </ColumnHeads>
    <Sheet>
      {rows.map(({ n, text, ls }) => (
        <SheetRow key={n} $small={n > 105}>
          <RowHead $small={n > 105}>{n}</RowHead>
          <Cell /><Cell /><Cell />
          <Cell $ls={ls}>{text}</Cell>
          <Cell /><Cell />
        </SheetRow>
      ))}
      <Annotations />
    </Sheet>
    <SheetTabs>
      <TabArrows>
        <svg width="5" height="7"><path d="M5 0V7L0 3.5Z" fill="#667094" /></svg>
        <svg width="5" height="7"><path d="M0 0V7L5 3.5Z" fill="#667094" /></svg>
      </TabArrows>
      <SheetTab>Sheet1</SheetTab>
      <SheetTab $active>JUNE2021</SheetTab>
      <SheetTab>MayASM2021</SheetTab>
      <SheetTab>Sheet3</SheetTab>
      <SheetTab><Center><PlusSpace><Stroke w={8} h={8} d="M4 .8V7.2M.8 4H7.2" c="#c3cbe8" sw={1.3} /></PlusSpace></Center></SheetTab>
      <i />
    </SheetTabs>
  </>
);

const Excel = () => (
  <ExcelWindow>
    <ExcelChrome />
    <ExcelRibbon />
    <UpdateBar>
      <svg width="9" height="9" viewBox="0 0 9 9"><circle cx="4.5" cy="4.5" r="4.5" fill="#8b6f45" /><path d="M2.8 2.8L6.2 6.2M6.2 2.8L2.8 6.2" stroke="#fff" strokeWidth="1.1" /></svg>
      <b>Office Update</b>
      <UpdateText>To keep up to date with security updates, fixes and improvements, choose Check for Updates.</UpdateText>
      <UpdateButton>Check for Updates</UpdateButton>
    </UpdateBar>
    <FormulaBar>
      <span>A400</span>
      <svg width="6" height="12"><path d="M0.5 4.5L3 0L5.5 4.5ZM0.5 7.5L3 12L5.5 7.5Z" fill="#a7b2d8" /></svg>
      <Stroke w={8} h={8} d="M1 1L7 7M7 1L1 7" c="#565c6c" sw={1.2} />
      <Stroke w={9} h={8} d="M1 4L3.5 7L8 1" c="#565c6c" sw={1.3} />
      <Fx>fx</Fx>
      <FormulaField />
      <svg width="6" height="5"><path d="M0 0H6L3 5Z" fill="#a7b2d8" /></svg>
    </FormulaBar>
    <ExcelSheet />
    <ExcelStatus>
      <i />
      <ActiveView><Stroke w={10} h={10} d="M.6 .6H9.4V9.4H.6ZM.6 3.5H9.4M.6 6.4H9.4M3.5 .6V9.4M6.4 .6V9.4" c="#f0f0f4" /></ActiveView>
      <Center><Stroke w={9} h={10} d="M.6 .6H8.4V9.4H.6ZM2.6 2.5H6.4V7.5H2.6ZM3 4H6M3 6H6" c="#e0e0e6" sw={0.9} /></Center>
      <Center><Stroke w={10} h={10} d="M.6 .6H9.4V9.4H.6ZM.6 6.2H6.4V.6M3.5 .6V6.2" c="#e0e0e6" /></Center>
      <Center><Stroke w={6} h={4} d="M.6 2H5.4" c="#fff" sw={1.3} /></Center>
      <ZoomTrack />
      <Stroke w={7} h={7} d="M3.5 .8V6.2M.8 3.5H6.2" c="#fff" sw={1.3} />
      <span>65%</span>
    </ExcelStatus>
  </ExcelWindow>
);

const SharedScreen = () => (
  <MacDesktop>
    <MacMenuBar />
    <MacBody>
      <SlideStrip>
        <StripTab>H</StripTab>
        {[0, 1, 2, 3, 4, 5, 6].map((i) => <StripNumber key={i}>6</StripNumber>)}
      </SlideStrip>
      <Excel />
      <BackEdge>
        <BackEdgeTop>
          <svg width="7" height="12" viewBox="0 0 7 12" fill="#8d8d8d"><path d="M0 .5H6V5H3L1.5 6.5V5H0ZM0 8Q3 8 3.5 12H0Z" /></svg>
        </BackEdgeTop>
        <BackEdgeRibbon><BackEdgeButton /></BackEdgeRibbon>
        <BackEdgeLine />
      </BackEdge>
      <BackStatus>
        <span>Slide 66 of 110</span>
        <span>English (United States)</span>
        <Stroke w={9} h={9} d="M1 5.5H8.4M1 8H6M4.6 .8L3.4 3H5.8Z" c="#a5adca" sw={0.9} />
        <span>Notes</span>
        <Stroke w={9} h={9} d="M.8 1H8.2V6H4L2.4 8V6H.8Z" c="#a5b0d6" fill="#a5b0d6" sw={0.8} />
        <span>Comments</span>
        <ActiveView $dim><Stroke w={10} h={9} d="M.6 .6H9.4V8.4H.6ZM3 .6V8.4M5 3H7.6V5.5H5ZM.6 6.6H9.4" c="#b4bee2" /></ActiveView>
        <Center><svg width="10" height="8" fill="#a5b0d6"><path d="M0 0H4V3H0ZM6 0H10V3H6ZM0 5H4V8H0ZM6 5H10V8H6Z" /></svg></Center>
        <Center><Stroke w={10} h={9} d="M5 1.5V8.4M5 1.5L.6 .8V7.6L5 8.4L9.4 7.6V.8ZM2 3H3.6M2 5H3.6M6.5 3H8M6.5 5H8" c="#7d87a8" /></Center>
        <Center><Stroke w={10} h={9} d="M.6 .6H9.4V5.6H.6ZM5 5.6V8.2M3 8.3H7M3 3H7" c="#a5b0d6" sw={0.9} /></Center>
        <Center><Stroke w={6} h={4} d="M.6 2H5.4" c="#7f88a4" sw={1.2} /></Center>
        <ZoomTrack $dim />
        <Stroke w={6} h={7} d="M3 .8V6.2M.6 3.5H5.4" c="#7f88a4" sw={1.2} />
        <span>61%</span>
        <Stroke w={10} h={10} d="M.6 .6H9.4V9.4H.6ZM2.5 2.5L4 4M7.5 2.5L6 4M2.5 7.5L4 6M7.5 7.5L6 6M5 .6V3M5 7V9.4M.6 5H3M7 5H9.4" c="#97a0c0" sw={0.8} />
      </BackStatus>
    </MacBody>
  </MacDesktop>
);

const App = () => (
  <Page>
    <GlobalStyle />
    <TitleBar>
      <WebexLogo s={14} />
      <TitleText>Network Recording Player - Agile Scrum Master</TitleText>
      <WindowButtons>
        <Stroke w={10} h={10} d="M0 5.5H10" c="#000" />
        <Stroke w={10} h={10} d="M.5 2.5H7.5V9.5H.5ZM2.5 2.5V.5H9.5V7.5H7.5" c="#000" />
        <Stroke w={10} h={10} d="M.5 .5L9.5 9.5M9.5 .5L.5 9.5" c="#000" />
      </WindowButtons>
    </TitleBar>
    <MenuBar>
      <span><u>F</u>ile</span><span><u>V</u>iew</span><span><u>I</u>nfo</span><span><u>H</u>elp</span>
    </MenuBar>
    <InfoBar>
      <InfoCell $w={182} $pad={10} $ls={-0.22}>Meeting Number: 1846 09 3544</InfoCell>
      <InfoCell $w={158} $pad={8}>Date: Sunday, July 11, 2021</InfoCell>
      <InfoCell $w={300} $pad={8} $ls={-0.19} $last>Time: 8:09 AM, Local Time (GMT +05:00)</InfoCell>
    </InfoBar>
    <Stage>
      <SharedScreen />
      <EventPanel>
        <PanelCap />
        <EventTable>
          {events.map(([name, time], i) => (
            <EventRow key={name} $selected={i === 0}><span>{name}</span><span>{time}</span></EventRow>
          ))}
          <EventRow><span /><span /></EventRow>
        </EventTable>
        <EventScroll><ScrollArrow /></EventScroll>
      </EventPanel>
      <PanelGrip><GripLines /></PanelGrip>
      <HiddenButtons><i /><i /></HiddenButtons>
      <ChatPanel>
        <ChatHeader>
          <RecordDot />
          <ChatTitle>Chat</ChatTitle>
          <svg width="13" height="11" viewBox="0 0 13 11"><ellipse cx="6.5" cy="4.5" rx="6" ry="4" fill="#6a86aa" /><path d="M5 8L6 10.5L8.5 8Z" fill="#6a86aa" /><path d="M3 4H5V5.5H3ZM5.7 4H7.5V5.5H5.7ZM8.2 4H10V5.5H8.2Z" fill="#eef3fa" /></svg>
          <HeaderStripes />
          <Stroke w={8} h={8} d="M1.5 1.5L6.5 6.5M6.5 1.5L1.5 6.5" c="#1d3b62" sw={1.5} />
        </ChatHeader>
        <ChatBody>
          <Messages>
            {messages.map((m) => (
              <Message key={m.from}><Sender>{m.from}</Sender>{m.text}</Message>
            ))}
          </Messages>
          <ChatScroll>
            <ScrollArrow up />
            <ChatThumb />
            <ScrollArrow />
          </ChatScroll>
        </ChatBody>
        <GripLines />
      </ChatPanel>
    </Stage>
    <Controls>
      <PlayerButton><svg width="7" height="9"><path d="M0 0H2.5V9H0ZM4.5 0H7V9H4.5Z" /></svg></PlayerButton>
      <PlayerButton $soft><svg width="9" height="9"><rect width="9" height="9" /></svg></PlayerButton>
      <svg width="14" height="16" viewBox="0 0 14 16" fill="none" stroke="#555"><path d="M.8 5.5H3.5L7.5 1.5V14.5L3.5 10.5H.8Z" fill="#ddd" /><path d="M9.2 5.5Q10.8 8 9.2 10.5M10.8 3.2Q14.5 8 10.8 12.8" /></svg>
      <VolumeTrack>
        <svg width="11" height="19" viewBox="0 0 11 19"><path d="M.5 18.5V5.5L5.5 .5L10.5 5.5V18.5Z" fill="#f6f6f6" stroke="#808080" /></svg>
      </VolumeTrack>
      <svg width="11" height="11" viewBox="0 0 11 11"><rect x=".5" y=".5" width="10" height="10" fill="#f0f0f0" stroke="#444" /><path d="M3 3L8 8M8 3L3 8" stroke="#333" strokeWidth="1.7" /></svg>
    </Controls>
    <Timeline>
      <Clock>01:01:02 / 05:00:47</Clock>
      <TrackArea>
        <Track />
        <Ticks />
        <PlayHead width="16" height="28" viewBox="0 0 16 28"><path d="M1 .5H15V4L8 10.5L1 4Z" fill="#e8e8e8" stroke="#555" /><path d="M8.5 10V28" stroke="#555" /></PlayHead>
      </TrackArea>
    </Timeline>
    <Taskbar>
      <TaskItem $w={48}><svg width="16" height="16" fill="#fff"><path d="M0 2.3L6.6 1.3V7.6H0ZM7.4 1.2L16 0V7.6H7.4ZM0 8.4H6.6V14.7L0 13.7ZM7.4 8.4H16V16L7.4 14.8Z" /></svg></TaskItem>
      <TaskItem $w={48}><svg width="17" height="16" viewBox="0 0 17 16" fill="none" stroke="#fff"><path d="M.5 .5V3.5H11.5V.5M.5 15.5V12.5H11.5V15.5M1.5 5.5H10.5V10.5H1.5ZM14.5 0V16" /><rect x="13" y="4" width="3" height="3" fill="#fff" stroke="none" /></svg></TaskItem>
      <TaskItem $w={54} $run>
        <svg width="24" height="24" viewBox="0 0 24 24">
          <path d="M0 13Q0 0 12 0Q24 1 24 10Q23 15.5 17 15.5Q14 15.4 14.8 13.5Q16 12 14.5 9.5Q11 5.5 5.5 8Q1.5 10 0 13Z" fill="#33c1c6" />
          <path d="M14 0Q24 2 24 10Q23 15.5 17 15.5Q14 15.4 14.8 13.5Q17 8 10 5Z" fill="#5ddb62" opacity="0.75" />
          <path d="M0 13Q1.5 6.5 8 7Q14.5 7 15 12Q9 8 8.5 14Q9 21 16 20.5Q20 20.5 22.5 17.5Q19 24 12 24Q1 23.5 0 13Z" fill="#1b7fd6" />
          <path d="M8.5 13Q5 18 9.5 22Q14 25.5 19 22Q21.5 20 22.5 17.5Q16 21.5 11.5 18.5Q8.5 16.5 8.5 13Z" fill="#11489b" />
        </svg>
      </TaskItem>
      <TaskItem $w={44} $run>
        <svg width="22" height="22" viewBox="0 0 22 22">
          <circle cx="11" cy="11" r="11" fill="#fbd13a" />
          <path d="M11 11L1.5 5.5A11 11 0 0 1 20.5 5.5H11Z" fill="#d9503f" />
          <path d="M1.5 5.5A11 11 0 0 0 11 22L15.8 13.8L11 11L6.2 13.8Z" fill="#1fa15d" />
          <circle cx="11" cy="11" r="5.2" fill="#fff" /><circle cx="11" cy="11" r="4.2" fill="#4688f1" />
        </svg>
      </TaskItem>
      <TaskItem $w={54} $run $stack>
        <svg width="22" height="19" viewBox="0 0 22 19"><path d="M0 0H9L11 3H0Z" fill="#d99a10" /><path d="M0 2.5H9L10.5 1.5H21.5V18H0Z" fill="#fbce58" /><path d="M4.5 18V10H17.5V18H14V14H8V18Z" fill="#3793dc" /></svg>
      </TaskItem>
      <TaskItem $w={44}>
        <svg width="18" height="18" viewBox="-9 -9 18 18" fill="none" stroke="#fff"><circle r="4.8" strokeWidth="2.6" /><path d="M0 -9V-6M0 9V6M-9 0H-6M9 0H6M-6.4 -6.4L-4.4 -4.4M6.4 6.4L4.4 4.4M6.4 -6.4L4.4 -4.4M-6.4 6.4L-4.4 4.4" strokeWidth="2.8" /></svg>
      </TaskItem>
      <TaskItem $w={54}>
        <svg width="24" height="22" viewBox="0 0 24 22"><path d="M7 2L21 1L22 20L14 21Z" fill="#c2b48e" /><path d="M8 1L20.5 2.5L15.5 21L1 17.5Z" fill="#9bd3dd" /><path d="M8 1L20.5 2.5L19 8L5.5 7Z" fill="#c9e9ee" /><path d="M9 17L19 8L15.5 21Z" fill="#4d9aa8" /></svg>
      </TaskItem>
      <TaskItem $w={44} $run $stack>
        <svg width="24" height="22" viewBox="0 0 24 22"><rect x="7" y="0" width="16" height="18" fill="#1173c7" /><path d="M15 0H23V6H15Z" fill="#50d9ff" /><path d="M7 6H15V12H7Z" fill="#0a5aa8" /><path d="M15 6H23V12H15Z" fill="#1d94e4" /><path d="M5 21.5V12L14 17L24 11V21.5Z" fill="#2ba7ee" /><rect x="0" y="5.5" width="12" height="12" rx="1" fill="#0f6cbd" /><ellipse cx="6" cy="11.5" rx="2.7" ry="3" stroke="#fff" strokeWidth="1.6" fill="none" /></svg>
      </TaskItem>
      <TaskItem $w={54} $run>
        <OfficeIcon letter="P" color="#d24726"><path d="M15 6.5A3 3 0 1 0 20.5 9H17.5V6M14 14H21M14 16.5H21" stroke="#d24726" strokeWidth="1.4" fill="none" /></OfficeIcon>
      </TaskItem>
      <TaskItem $w={44} $run $stack>
        <OfficeIcon letter="W" color="#2b579a"><path d="M14 6.5H21.5M14 9H21.5M14 11.5H21.5M14 14H21.5M14 16.5H21.5" stroke="#2b579a" strokeWidth="1.1" /></OfficeIcon>
      </TaskItem>
      <TaskItem $w={52} $run $stack>
        <OfficeIcon letter="X" color="#217346"><path d="M14.5 5.5H21.5V18H14.5M14 8H21.5M14 10.5H21.5M14 13H21.5M14 15.5H21.5M18 5.5V18" stroke="#217346" strokeWidth="1" fill="none" /></OfficeIcon>
      </TaskItem>
      <TaskItem $w={48} $run $active><WebexLogo s={22} /></TaskItem>
      <Tray>
        <Stroke w={12} h={8} d="M1 6.5L6 1.5L11 6.5" c="#fff" sw={1.2} />
        <svg width="17" height="12" viewBox="0 0 17 12" fill="none" stroke="#fff"><path d="M6 2.5H14.5V10.5H4.5V8M14.5 5H16V8H14.5M1 1.5V4Q1 5.5 2.7 5.5Q4.5 5.5 4.5 4V1.5M0 3H5.5M2.7 5.5V8.5H4.5" /><path d="M6.5 4.5H12.5V8.5H6.5Z" fill="#fff" /></svg>
        <svg width="12" height="16" viewBox="0 0 12 16"><rect width="12" height="16" rx="5.5" fill="#0a84f5" /><path d="M3 5.3L8.6 10.5L6 13V3L8.6 5.5L3 10.7" stroke="#fff" fill="none" /></svg>
        <svg width="13" height="13" viewBox="0 0 13 13" fill="none"><path d="M.5 11.5Q1 2 12 .8M3.5 12Q4 5 12 3.8" stroke="#8f8a8a" /><path d="M6.5 12Q7 8 12 7" stroke="#fff" /><circle cx="11" cy="11" r="1.5" fill="#fff" /></svg>
        <svg width="17" height="14" viewBox="0 0 17 14" fill="none" stroke="#fff"><path d="M.6 4.6H3L6.5 1.2V12.8L3 9.4H.6Z" /><path d="M8.8 4.8Q10 7 8.8 9.2M11 3Q13.3 7 11 11M13.3 1.2Q17 7 13.3 12.8" /></svg>
        <span>ENG</span>
        <TrayClock>{"5:39 PM\n7/13/2021"}</TrayClock>
        <i />
        <Stroke w={17} h={16} d="M.5 .5H15.5V12.5H10.5L8 15L5.5 12.5H.5Z" c="#fff" />
        <ShowDesktop />
      </Tray>
    </Taskbar>
  </Page>
);

export default App;
